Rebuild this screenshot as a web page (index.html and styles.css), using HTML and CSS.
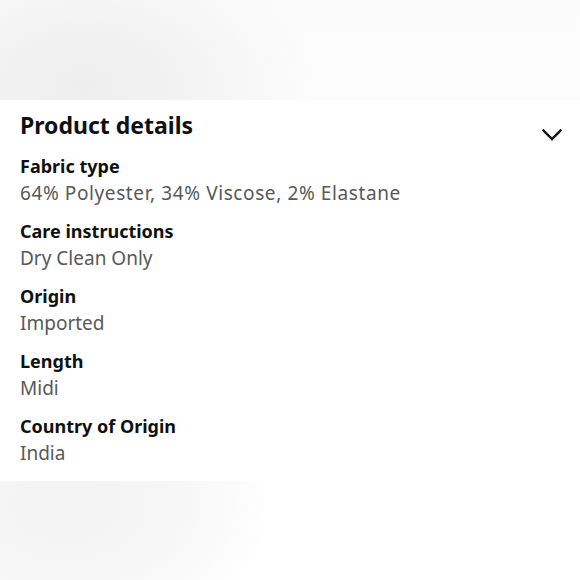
FILE: index.html
```html
<!DOCTYPE html>
<html lang="en">
<head>
<meta charset="utf-8">
<link rel="stylesheet" href="styles.css">
</head>
<body>
<div class="band band-top"></div>
<section class="panel">
  <div class="header">
    <h2 class="title">Product details</h2>
    <svg class="chev" width="20" height="12" viewBox="0 0 20 12"><path d="M1.5 1.5 L10 10 L18.5 1.5" fill="none" stroke="#0f1111" stroke-width="2.4" stroke-linecap="square"/></svg>
  </div>
  <dl class="list">
    <div class="row"><dt>Fabric type</dt><dd class="wide">64% Polyester, 34% Viscose, 2% Elastane</dd></div>
    <div class="row"><dt>Care instructions</dt><dd>Dry Clean Only</dd></div>
    <div class="row"><dt>Origin</dt><dd>Imported</dd></div>
    <div class="row"><dt>Length</dt><dd>Midi</dd></div>
    <div class="row"><dt>Country of Origin</dt><dd>India</dd></div>
  </dl>
</section>
<div class="band band-bottom"></div>
</body>
</html>
```
FILE: styles.css
```css
html, body {
  margin: 0;
  padding: 0;
  background: #ffffff;
  font-family: "Noto Sans", "Open Sans", sans-serif;
  color: #0f1111;
}
body {
  width: 580px;
  height: 580px;
  overflow: hidden;
}
.band {
  width: 100%;
}
.band-top {
  height: 100px;
  background:
    radial-gradient(ellipse 230px 150px at 85px 85px, #eeeeee 0%, #f2f2f2 40%, #f8f8f8 75%, rgba(252,252,252,0) 100%),
    linear-gradient(#fbfbfb, #fcfcfc);
}
.band-bottom {
  height: 100px;
  background:
    radial-gradient(ellipse 210px 140px at 65px 25px, #f3f3f3 0%, #f6f6f6 50%, #fbfbfb 80%, rgba(255,255,255,0) 100%);
}
.panel {
  background: #ffffff;
  padding: 11px 18px 16px 20px;
  height: 354px;
}
.header {
  display: flex;
  justify-content: space-between;
  align-items: flex-start;
}
.title {
  margin: 0;
  font-size: 23px;
  line-height: 28px;
  font-weight: 700;
}
.chev {
  margin-top: 18px;
  display: block;
}
.list {
  margin: 13px 0 0 0;
  display: flex;
  flex-direction: column;
  gap: 13px;
}
.row dt {
  font-size: 18px;
  line-height: 24px;
  font-weight: 700;
}
.row dd {
  margin: 0;
  padding-top: 2px;
  font-size: 19px;
  line-height: 26px;
  color: #565959;
}
.row dd.wide {
  letter-spacing: 0.6px;
}
```
